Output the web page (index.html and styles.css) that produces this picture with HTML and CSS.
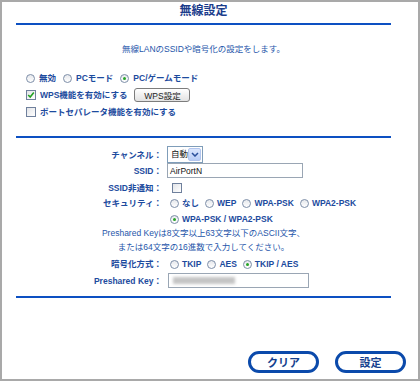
FILE: index.html
```html
<!DOCTYPE html>
<html lang="ja">
<head>
<meta charset="utf-8">
<title>無線設定</title>
<link rel="stylesheet" href="styles.css">
</head>
<body>
<div class="frame">
  <div class="main">
    <h1 class="title">無線設定</h1>
    <p class="lead">無線LANのSSIDや暗号化の設定をします。</p>

    <div class="options">
      <div class="opt-row">
        <label class="choice"><span class="radio"></span>無効</label>
        <label class="choice"><span class="radio"></span>PCモード</label>
        <label class="choice"><span class="radio on"></span>PC/ゲームモード</label>
      </div>
      <div class="opt-row">
        <label class="choice"><span class="check on"><svg viewBox="0 0 8 8" width="8" height="8"><polyline points="1.2,4 3.2,6 6.8,1.6" fill="none" stroke="#21a121" stroke-width="1.6"/></svg></span>WPS機能を有効にする</label>
        <span class="btn-small">WPS設定</span>
      </div>
      <div class="opt-row">
        <label class="choice"><span class="check"></span>ポートセパレータ機能を有効にする</label>
      </div>
    </div>

    <div class="rule rule-2"></div>

    <div class="form">
      <div class="form-row row-channel">
        <span class="label">チャンネル：</span>
        <span class="select"><span class="select-text">自動</span><span class="select-btn"><svg viewBox="0 0 8 5" width="8" height="5"><polyline points="1,1 4,4 7,1" fill="none" stroke="#2a4f9a" stroke-width="1.5"/></svg></span></span>
      </div>
      <div class="form-row row-ssid">
        <span class="label">SSID：</span>
        <span class="input input-ssid">AirPortN</span>
      </div>
      <div class="form-row row-hide">
        <span class="label">SSID非通知：</span>
        <span class="check check-form"></span>
      </div>
      <div class="form-row row-sec">
        <span class="label">セキュリティ：</span>
        <div class="radios">
          <label class="choice"><span class="radio"></span>なし</label>
          <label class="choice"><span class="radio"></span>WEP</label>
          <label class="choice"><span class="radio"></span>WPA-PSK</label>
          <label class="choice"><span class="radio"></span>WPA2-PSK</label>
          <label class="choice"><span class="radio on"></span>WPA-PSK / WPA2-PSK</label>
        </div>
      </div>
      <p class="note">Preshared Keyは8文字以上63文字以下のASCII文字、</p>
      <p class="note">または64文字の16進数で入力してください。</p>
      <div class="form-row row-enc">
        <span class="label">暗号化方式：</span>
        <div class="radios">
          <label class="choice"><span class="radio"></span>TKIP</label>
          <label class="choice"><span class="radio"></span>AES</label>
          <label class="choice"><span class="radio on"></span>TKIP / AES</label>
        </div>
      </div>
      <div class="form-row row-key">
        <span class="label">Preshared Key：</span>
        <span class="input input-key"><span class="blur"></span></span>
      </div>
    </div>

    <div class="rule rule-3"></div>
  </div>

  <div class="actions">
    <span class="btn">クリア</span>
    <span class="btn">設定</span>
  </div>
</div>
</body>
</html>
```

FILE: styles.css
```css
* { box-sizing: border-box; }

html, body {
  margin: 0;
  padding: 0;
  background: #ffffff;
}

body {
  font-family: "Liberation Sans", "Noto Sans CJK JP", sans-serif;
  font-size: 8.5px;
  color: #1d4b9e;
}

.frame {
  width: 420px;
  height: 381px;
  border: 2px solid #a9a9a9;
  display: flex;
  flex-direction: column;
}

.main {
  margin: 0 27px 0 14px;
  display: flex;
  flex-direction: column;
}

.title {
  margin: 0;
  box-sizing: content-box;
  height: 19px;
  line-height: 19px;
  padding-bottom: 2px;
  text-align: center;
  font-size: 12px;
  font-weight: 700;
  color: #1b3d8c;
  border-bottom: 2px solid #0d50c2;
}

.lead {
  margin: 18px 0 0;
  line-height: 12px;
  text-align: center;
  font-weight: 400;
  color: #2656aa;
}

.options {
  margin-top: 16px;
  padding-left: 10px;
  display: flex;
  flex-direction: column;
  gap: 3px;
}

.opt-row {
  height: 14px;
  display: flex;
  align-items: center;
  gap: 7px;
}

.choice {
  display: inline-flex;
  align-items: center;
  gap: 3px;
  font-weight: 700;
  white-space: nowrap;
  line-height: 14px;
}

.opt-row .choice { gap: 4px; }

.radio {
  width: 9px;
  height: 9px;
  border: 1px solid #7d8ea8;
  border-radius: 50%;
  background: linear-gradient(#e6e8ec, #ffffff);
  display: inline-flex;
  align-items: center;
  justify-content: center;
  flex: none;
}

.radio.on::after {
  content: "";
  width: 3px;
  height: 3px;
  border-radius: 50%;
  background: #27a427;
}

.check {
  width: 10px;
  height: 10px;
  border: 1px solid #6f809c;
  background: linear-gradient(135deg, #e2e4e8, #ffffff);
  display: inline-flex;
  align-items: center;
  justify-content: center;
  flex: none;
}

.btn-small {
  width: 56px;
  height: 14px;
  border: 1px solid #7c7c7c;
  border-radius: 3px;
  background: linear-gradient(#ffffff, #e2e2e2);
  color: #222222;
  font-weight: 400;
  font-size: 8.5px;
  display: inline-flex;
  align-items: center;
  justify-content: center;
}

.rule {
  border-top: 2px solid #0d50c2;
}

.rule-2 { margin-top: 17px; }
.rule-3 { margin-top: 8px; }

.form {
  margin-top: 8px;
  display: flex;
  flex-direction: column;
}

.form-row {
  display: grid;
  grid-template-columns: 146px 1fr;
  column-gap: 5px;
  align-items: center;
}

.label {
  text-align: right;
  font-weight: 700;
  white-space: nowrap;
  line-height: 14px;
}

.row-channel { height: 17px; }
.row-ssid { height: 15px; }
.row-hide { height: 14px; margin-top: 3px; }
.row-sec { margin-top: 1px; align-items: start; }
.row-enc { height: 14px; margin-top: 3px; }
.row-key { height: 15px; margin-top: 2px; }

.select {
  width: 36px;
  height: 17px;
  border: 1px solid #7f9db9;
  display: flex;
  align-items: center;
  padding: 1px;
  background: #ffffff;
}

.select-text {
  flex: 1;
  color: #111111;
  padding-left: 2px;
  line-height: 13px;
}

.select-btn {
  width: 13px;
  height: 13px;
  background: linear-gradient(#dbe6fd, #b9cdf6);
  border: 1px solid #b2c5ee;
  border-radius: 2px;
  display: flex;
  align-items: center;
  justify-content: center;
}

.input {
  height: 15px;
  border: 1px solid #9aa6b4;
  background: #ffffff;
  display: flex;
  align-items: center;
  color: #111111;
  padding-left: 2px;
}

.input-ssid { width: 136px; }
.input-key { width: 141px; margin-left: 1px; }

.blur {
  width: 62px;
  height: 7px;
  margin-left: 2px;
  background: #c4c4c4;
  filter: blur(1.5px);
}

.check-form {
  margin-left: 5px;
}

.radios {
  display: flex;
  flex-wrap: wrap;
  column-gap: 6px;
  row-gap: 2px;
  padding-left: 3px;
}

.note {
  margin: 0;
  line-height: 14px;
  text-align: center;
  font-weight: 400;
  color: #2656aa;
}

.actions {
  margin-top: auto;
  display: flex;
  justify-content: flex-end;
  gap: 16px;
  padding: 0 12px 6px 0;
}

.btn {
  width: 71px;
  height: 22px;
  border: 3px solid #0b4aab;
  border-radius: 11px;
  background: #ffffff;
  color: #143f8e;
  font-size: 11px;
  font-weight: 700;
  display: flex;
  align-items: center;
  justify-content: center;
}
```
